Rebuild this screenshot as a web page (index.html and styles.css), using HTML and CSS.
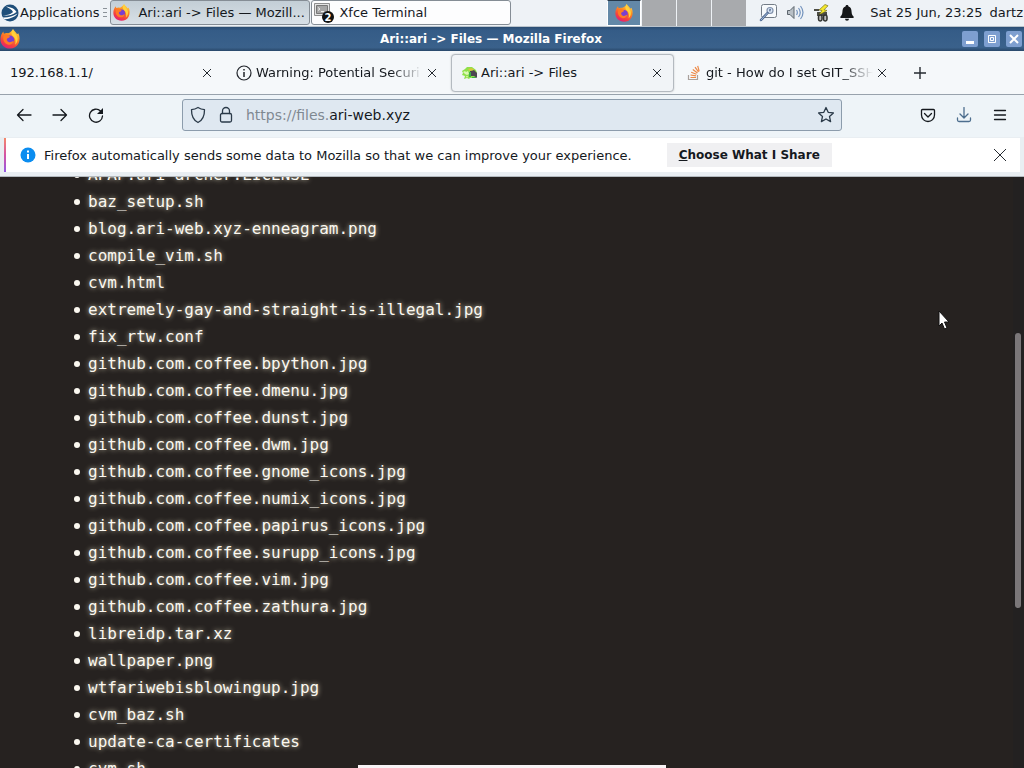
FILE: index.html
```html
<!DOCTYPE html>
<html lang="en">
<head>
    <meta charset="UTF-8">
    <meta name="viewport" content="width=device-width, initial-scale=1.0">
    <title>Ari::ari -&gt; Files</title>
    <link rel="stylesheet" href="styles.css">
</head>
<body>

<!-- Shared firefox logo -->
<svg class="sprite" aria-hidden="true">
    <defs>
        <linearGradient id="flame" x1="0.8" y1="0" x2="0.3" y2="1">
            <stop offset="0" stop-color="#ffe14d"/>
            <stop offset="0.4" stop-color="#ff8a1e"/>
            <stop offset="0.75" stop-color="#f5403f"/>
            <stop offset="1" stop-color="#e01f79"/>
        </linearGradient>
        <symbol id="firefox" viewBox="0 0 20 20">
            <path fill="url(#flame)" d="M13 0c1 2 3 3 4 5 .6-.1 1-.4 1.300-.8C20 7 20 12 18.500 14.600 16.800 18 13.600 19.600 10 19.600 4.500 19.600.4 15.500.4 10.200.4 7 1.700 4.300 3.400 2.500c0 1 .2 1.600.6 2.200C5.200 4 6.800 3.900 8 4.300c1.800-.6 3.900-2 5-4.300z"/>
            <circle fill="#7a3fd0" cx="10" cy="10.800" r="4.200"/>
            <path fill="#ff7a24" d="M3.600 7c2-1.600 4.600-1.400 6.400.6-.5 1.300-1.700 1.400-2.700 1.900-1 .7-.4 2.800 1.300 3.500 1.800.7 3.400-.5 5.100-1-.6 3.200-3.500 4.200-5.900 3.500C4 14.500 2.600 10.600 3.600 7z"/>
            <path fill="#ffd23c" d="M13 .4c.5 3 4.400 5 4.700 9.200.1 2.600-1 4.700-2.600 6.200 1-3.200.5-6.600-2-8.500-1.700-1.500-2.400-4-.1-6.900z"/>
        </symbol>
    </defs>
</svg>

<header class="panel">
    <button class="app-menu">
        <svg width="18" height="18" viewBox="0 0 18 18"><circle cx="9" cy="9" r="8.500" fill="#1f4f7a"/><path fill="#fff" d="M5 2.500c5 .5 9 2.500 10.500 5.500C12 11 7 12 1.500 11.800 7 11 11 9.500 12 8 11 5.500 8 4 5 2.500z"/><path fill="#fff" d="M1.800 13.600c5 .2 10-.8 14.700-4-1 2.300-7 6-13.500 5.500z"/></svg>
        <span>Applications</span>
    </button>
    <span class="handle"></span>
    <button class="task task-active">
        <svg width="17" height="17"><use href="#firefox"/></svg>
        <span>Ari::ari -&gt; Files — Mozill...</span>
    </button>
    <button class="task">
        <svg width="20" height="20" viewBox="0 0 20 20"><path fill="#e4e4e4" stroke="#8e8e8e" d="M.5.500h15v12H.5z"/><path fill="#a5a5a5" stroke="#777" d="M2.500 2.500h11v8h-11z"/><path stroke="#eee" fill="none" d="M4 4.500l2 1.500-2 1.500M7 8.500h3"/><circle cx="14" cy="14" r="6" fill="#111"/><text class="badge" x="14" y="18">2</text></svg>
        <span>Xfce Terminal</span>
    </button>
    <nav class="pager" aria-label="Workspaces">
        <button class="desk desk-active" aria-label="Workspace 1"><svg width="18" height="18"><use href="#firefox"/></svg></button>
        <button class="desk" aria-label="Workspace 2"></button>
        <button class="desk" aria-label="Workspace 3"></button>
        <button class="desk" aria-label="Workspace 4"></button>
    </nav>
    <div class="tray">
        <svg width="18" height="18" viewBox="0 0 18 18"><rect x="2.500" y=".5" width="15" height="13" rx="2" fill="#f7fafc" stroke="#737c86"/><circle cx="11" cy="6.500" r="3" fill="#d7e4f3" stroke="#8292ac" stroke-width="1.200"/><path d="M11 4.500l1 1-1 2.500-1-2z" fill="#55688c"/><path d="M8.500 9L2 16" stroke="#4a648c" stroke-width="2.500" stroke-linecap="round"/><path d="M8.500 9L2 16" stroke="#a5bddd" stroke-linecap="round"/></svg>
        <svg width="18" height="18" viewBox="0 0 18 18"><path fill="#b9c0c6" stroke="#5d666e" d="M1.500 6.500h2.500l4-4v12l-4-4H1.500z"/><path fill="none" stroke="#7393bd" stroke-width="1.200" d="M10.500 6q1.700 2.500 0 5M12.500 4q3.500 4.500 0 9M14.500 2q5 6.500 0 13"/></svg>
        <svg width="18" height="18" viewBox="0 0 18 18"><path fill="#4c4c45" d="M1 5h5v2H1zM4 8h10v4H4z"/><path fill="#f6e92c" stroke="#77741b" stroke-width=".7" d="M12 .500L6 6l3 .5L6 11l8-4.500-3-.7 4-4z"/><g fill="#bbb" stroke="#30322f" stroke-width="1.500"><rect x="5.500" y="11" width="3.500" height="6" rx="1.700"/><rect x="10.500" y="11" width="3.500" height="6" rx="1.700"/></g></svg>
        <svg width="14" height="16" viewBox="0 0 14 16"><path fill="#151719" d="M7 0c1 0 1.500.7 1.500 1.500C11 2.300 11.500 4.500 11.600 7c.1 2.500.9 3.500 2 4.500V13H.4v-1.500c1.100-1 1.900-2 2-4.500.1-2.500.6-4.700 3.100-5.500C5.500.7 6 0 7 0zM5 13.700h4a2 2 0 0 1-4 0z"/></svg>
    </div>
    <time class="clock">Sat 25 Jun, 23:25</time>
    <span class="user">dartz</span>
</header>

<div class="titlebar">
    <svg width="20" height="20"><use href="#firefox"/></svg>
    <h1>Ari::ari -&gt; Files — Mozilla Firefox</h1>
    <div class="win-buttons">
        <button aria-label="Minimize"><svg width="16" height="16" viewBox="0 0 16 16"><path fill="#fff" d="M4 10h8v3H4z"/></svg></button>
        <button aria-label="Maximize"><svg width="16" height="16" viewBox="0 0 16 16"><path fill="none" stroke="#fff" d="M4.500 4.500h7v7h-7z"/><path fill="none" stroke="#fff" d="M6.500 6.500h3v3h-3z"/></svg></button>
        <button aria-label="Close"><svg width="16" height="16" viewBox="0 0 16 16"><path stroke="#fff" stroke-width="2" d="M4 4l8 8M12 4l-8 8"/></svg></button>
    </div>
</div>

<div class="tabs">
    <div class="tab">
        <a href="#" class="tab-title">192.168.1.1/</a>
        <button class="tab-close" aria-label="Close tab"><svg width="10" height="10" viewBox="0 0 10 10"><path d="M1 1l8 8M9 1l-8 8"/></svg></button>
    </div>
    <div class="tab">
        <svg width="16" height="16" viewBox="0 0 16 16"><circle cx="8" cy="8" r="7" fill="none" stroke="#20242a" stroke-width="1.200"/><path stroke="#20242a" stroke-width="1.500" d="M8 7v5M8 4v1.500"/></svg>
        <a href="#" class="tab-title tab-fade">Warning: Potential Securi</a>
        <button class="tab-close" aria-label="Close tab"><svg width="10" height="10" viewBox="0 0 10 10"><path d="M1 1l8 8M9 1l-8 8"/></svg></button>
    </div>
    <div class="tab tab-active">
        <svg width="16" height="16" viewBox="0 0 16 16"><path fill="#8fe04a" d="M1 6l3-2 2-2 5 0 4 3 1 3-1 5H9l-1 1-2-1-3 1 1-3-3-1 1-2z"/><path fill="#dcf8b4" d="M2 7l2-1 1 1 2-1 1 3-2 1-2-1zM5 11l2 0-1 2z"/><path fill="#4b4551" d="M9 6l4-1 3 3v5l-3-2-4 0z"/><path fill="#d9c63a" d="M7 4l4-1 2 2-4 1z"/><path fill="#3fae46" d="M8 7l2 0v5H8zM11 12h4v1h-4z"/></svg>
        <a href="#" class="tab-title">Ari::ari -&gt; Files</a>
        <button class="tab-close" aria-label="Close tab"><svg width="10" height="10" viewBox="0 0 10 10"><path d="M1 1l8 8M9 1l-8 8"/></svg></button>
    </div>
    <div class="tab">
        <svg width="16" height="16" viewBox="0 0 16 16"><path fill="none" stroke="#a9a19c" stroke-width="1.200" d="M2.500 10v4.500h9V10"/><path stroke="#ed8a48" stroke-width="1.200" d="M4.500 12.500h5.500M4.500 10l5.500.9M5.200 7.300l5.300 2M6.800 4.500l4.700 3.500M9 2.200l3.500 4.600M11.700.8l1.500 5.500"/></svg>
        <a href="#" class="tab-title tab-fade">git - How do I set GIT_SSH</a>
        <button class="tab-close" aria-label="Close tab"><svg width="10" height="10" viewBox="0 0 10 10"><path d="M1 1l8 8M9 1l-8 8"/></svg></button>
    </div>
    <button class="new-tab" aria-label="New tab"><svg width="14" height="14" viewBox="0 0 14 14"><path d="M7 1v12M1 7h12"/></svg></button>
</div>

<div class="toolbar">
    <div class="tools">
        <button aria-label="Back"><svg width="16" height="16" viewBox="0 0 16 16"><path d="M15 8H1.500M7 2.500L1.500 8 7 13.500"/></svg></button>
        <button aria-label="Forward"><svg width="16" height="16" viewBox="0 0 16 16"><path d="M1 8h13.500M9 2.500L14.500 8 9 13.500"/></svg></button>
        <button aria-label="Reload"><svg width="16" height="16" viewBox="0 0 16 16"><path d="M12.500 4A6.500 6.500 0 1 0 14.500 9"/><path fill="#15191e" stroke="none" d="M15 1v6H9z"/></svg></button>
    </div>
    <div class="urlbar">
        <svg width="16" height="18" viewBox="0 0 16 18"><path d="M8 1.500c2 1.300 4 2 6.500 2.200C14.600 10 13 14 8 16.500 3 14 1.400 10 1.500 3.700 4 3.500 6 2.800 8 1.500z"/></svg>
        <svg width="16" height="18" viewBox="0 0 16 18"><rect x="2.500" y="7.500" width="11" height="8.500" rx="1.500"/><path d="M4.500 7.500V5a3.500 3.500 0 0 1 7 0v2.500"/></svg>
        <a href="#" class="url"><span>https://files.</span>ari-web.xyz</a>
        <button aria-label="Bookmark this page"><svg width="18" height="18" viewBox="0 0 18 18"><path d="M9 1.500l2.200 4.800 5.200.6-3.900 3.500 1.100 5.200L9 13l-4.600 2.600 1.100-5.200L1.600 6.900l5.200-.6z"/></svg></button>
    </div>
    <div class="tools tools-right">
        <button aria-label="Save to Pocket"><svg width="16" height="16" viewBox="0 0 16 16"><path d="M2.500 2.500h11a1 1 0 0 1 1 1V8a6.500 6.500 0 0 1-13 0V3.500a1 1 0 0 1 1-1zM4.500 6.500L8 10l3.500-3.500"/></svg></button>
        <button class="download" aria-label="Downloads"><svg width="16" height="16" viewBox="0 0 16 16"><path d="M8 .5v10M4 7l4 4 4-4M1.500 11v2a1.500 1.500 0 0 0 1.500 1.500h10a1.500 1.500 0 0 0 1.500-1.500v-2"/></svg></button>
        <button aria-label="Open menu"><svg width="16" height="16" viewBox="0 0 16 16"><path d="M2.500 3.500h11M2.500 8h11M2.500 12.500h11"/></svg></button>
    </div>
</div>

<div class="notice-wrap">
    <div class="notice">
        <svg width="16" height="16" viewBox="0 0 16 16"><circle cx="8" cy="8" r="7.500" fill="#0b8df0"/><path stroke="#fff" stroke-width="2" d="M8 7v5M8 3.500v2"/></svg>
        <p>Firefox automatically sends some data to Mozilla so that we can improve your experience.</p>
        <button class="share"><u>C</u>hoose What I Share</button>
        <button class="notice-close" aria-label="Dismiss"><svg width="14" height="14" viewBox="0 0 14 14"><path d="M1 1l12 12M13 1L1 13"/></svg></button>
    </div>
</div>

<main class="page">
    <ul class="files">
        <li><a href="#">APAP.ari-archer.LICENSE</a></li>
        <li><a href="#">baz_setup.sh</a></li>
        <li><a href="#">blog.ari-web.xyz-enneagram.png</a></li>
        <li><a href="#">compile_vim.sh</a></li>
        <li><a href="#">cvm.html</a></li>
        <li><a href="#">extremely-gay-and-straight-is-illegal.jpg</a></li>
        <li><a href="#">fix_rtw.conf</a></li>
        <li><a href="#">github.com.coffee.bpython.jpg</a></li>
        <li><a href="#">github.com.coffee.dmenu.jpg</a></li>
        <li><a href="#">github.com.coffee.dunst.jpg</a></li>
        <li><a href="#">github.com.coffee.dwm.jpg</a></li>
        <li><a href="#">github.com.coffee.gnome_icons.jpg</a></li>
        <li><a href="#">github.com.coffee.numix_icons.jpg</a></li>
        <li><a href="#">github.com.coffee.papirus_icons.jpg</a></li>
        <li><a href="#">github.com.coffee.surupp_icons.jpg</a></li>
        <li><a href="#">github.com.coffee.vim.jpg</a></li>
        <li><a href="#">github.com.coffee.zathura.jpg</a></li>
        <li><a href="#">libreidp.tar.xz</a></li>
        <li><a href="#">wallpaper.png</a></li>
        <li><a href="#">wtfariwebisblowingup.jpg</a></li>
        <li><a href="#">cvm_baz.sh</a></li>
        <li><a href="#">update-ca-certificates</a></li>
        <li><a href="#">cvm.sh</a></li>
    </ul>
    <div class="scrollbar"><div class="thumb"></div></div>
</main>

<!-- Hidden dock edge and mouse pointer -->
<div class="dock"></div>
<svg class="pointer" width="12" height="20" viewBox="0 0 12 20"><path fill="#fff" stroke="#111" d="M1 1v15l3-3 2.500 6 2.500-1-2.500-6H11z"/></svg>

</body>
</html>
```
FILE: styles.css
```css
* {
    box-sizing: border-box;
}
body {
    margin: 0;
    height: 100vh;
    display: flex;
    flex-direction: column;
    overflow: hidden;
    position: relative;
    font-family: "DejaVu Sans", sans-serif;
    font-size: 13px;
    color: #15191e;
    background-color: #262220;
}
button {
    font: inherit;
    color: inherit;
    border: none;
    background: none;
    padding: 0;
    display: flex;
    align-items: center;
    justify-content: center;
}
a {
    color: inherit;
    text-decoration: none;
}
svg {
    flex: none;
    display: block;
}
.sprite {
    position: absolute;
    width: 0;
    height: 0;
}

/* Desktop panel */
.panel {
    flex: none;
    height: 27px;
    display: flex;
    align-items: center;
    padding-bottom: 1px;
    background-color: #eef2f6;
    border-bottom: 1px solid #b9c3cc;
    white-space: nowrap;
}
.app-menu {
    gap: 1px;
    padding-left: 1px;
}
.handle {
    width: 4px;
    height: 10px;
    margin: 0 3px 0 4px;
    background: repeating-linear-gradient(#8b9299 0 1px, transparent 1px 4px);
}
.task {
    flex: 0 1 200px;
    min-width: 0;
    height: 25px;
    margin-right: 1px;
    justify-content: flex-start;
    gap: 5px;
    padding-left: 2px;
    overflow: hidden;
    background-color: #fdfdfe;
    border: 1px solid #858d95;
    border-radius: 3px;
}
.task-active {
    gap: 8px;
    background: linear-gradient(#c3ced6, #d8e0e6);
}
.badge {
    font-size: 10px;
    font-weight: bold;
    fill: #fff;
    text-anchor: middle;
}
.pager {
    display: flex;
    gap: 1px;
    height: 26px;
    margin-left: auto;
    background-color: #eef2f6;
}
.desk {
    width: 34px;
    background-color: #a8aaad;
}
.desk-active {
    background-color: #6388a7;
    border: 1px solid #fff;
    border-top-color: #26384a;
}
.tray {
    display: flex;
    align-items: center;
    gap: 9px;
    padding: 0 16px 0 13px;
}
.user {
    padding: 0 1px 0 7px;
}

/* Window title */
.titlebar {
    flex: none;
    height: 24px;
    display: flex;
    align-items: center;
    color: #fff;
    background: linear-gradient(#2b4d73, #355c87 15%, #3a618b 85%, #29486a);
}
.titlebar h1 {
    flex: 1;
    margin: 0;
    font-size: 12px;
    text-align: center;
}
.win-buttons {
    display: flex;
    gap: 6px;
    padding-right: 2px;
}
.win-buttons button {
    background-color: #7e9fd0;
    border-radius: 2px;
}

/* Tab strip */
.tabs {
    flex: none;
    height: 44px;
    display: flex;
    align-items: center;
    padding-left: 1px;
    background-color: #f5f8fa;
    border-bottom: 1px solid #98a2ac;
}
.tab {
    flex: 0 1 223px;
    min-width: 0;
    height: 38px;
    margin-right: 2px;
    display: flex;
    align-items: center;
    gap: 4px;
    padding: 0 11px 0 9px;
    border: 1px solid transparent;
    border-radius: 4px;
}
.tab:first-child {
    padding-left: 8px;
}
.tab-active {
    background-color: #f1f4f7;
    border-color: #b4bac0;
    box-shadow: 0 0 2px rgba(0, 0, 0, 0.2);
}
.tab-title {
    flex: 1;
    min-width: 0;
    overflow: hidden;
    white-space: nowrap;
}
.tab-fade {
    mask-image: linear-gradient(to left, transparent, #000 32px);
}
.tab-close path,
.new-tab path,
.notice-close path {
    fill: none;
    stroke: #252a30;
    stroke-width: 1;
}
.new-tab {
    margin-left: 12px;
}
.new-tab path {
    stroke-width: 1.4;
}

/* Navigation */
.toolbar {
    flex: none;
    height: 42px;
    display: flex;
    align-items: center;
    padding-bottom: 2px;
    background-color: #eef4f8;
}
.toolbar svg {
    fill: none;
    stroke: #15191e;
    stroke-width: 1.3;
    stroke-linecap: round;
    stroke-linejoin: round;
}
.tools {
    flex: 0 0 182px;
    display: flex;
    gap: 20px;
    padding: 0 16px;
}
.tools-right {
    justify-content: flex-end;
}
.toolbar .download svg {
    stroke: #4d6e8e;
}
.urlbar {
    flex: 1;
    min-width: 0;
    height: 32px;
    display: flex;
    align-items: center;
    gap: 12px;
    padding: 0 6px 0 7px;
    font-size: 14px;
    background-color: #dfe8f1;
    border: 1px solid #8c9cac;
    border-radius: 3px;
}
.urlbar svg {
    stroke: #2b3a49;
}
.url {
    flex: 1;
}
.url span {
    color: #7f8891;
}

/* Data sharing notice */
.notice-wrap {
    flex: none;
    padding: 1px 4px 4px;
    background-color: #e9eef2;
    border-bottom: 1px solid #b3b9be;
}
.notice {
    height: 34px;
    display: flex;
    align-items: center;
    padding: 0 13px 0 14px;
    background-color: #fff;
    border-left: 2px solid;
    border-image: linear-gradient(#f68c66, #d453a4, #9059e6) 1;
}
.notice p {
    margin: 0 35px 0 8px;
    white-space: nowrap;
}
.share {
    height: 24px;
    padding: 0 12px;
    font-size: 12px;
    font-weight: bold;
    background-color: #f0f0f2;
    white-space: nowrap;
}
.notice-close {
    margin-left: auto;
}

/* File listing */
.page {
    flex: 1;
    min-height: 0;
    display: flex;
    overflow: hidden;
    color: #fbf8f0;
    background-color: #262220;
}
.files {
    flex: 1;
    margin: -16px 0 0;
    padding-left: 74px;
    list-style: none;
    font-family: "DejaVu Sans Mono", monospace;
    font-size: 16px;
    line-height: 27px;
}
.files li {
    display: flex;
    align-items: center;
    gap: 8px;
}
.files li::before {
    content: "";
    width: 6px;
    height: 6px;
    border-radius: 50%;
    background-color: #fbf8f0;
}
.files a {
    text-shadow: 0 0 5px #d9d2b8;
}
.scrollbar {
    width: 11px;
    padding: 156px 3px 0 2px;
    background-color: #232121;
}
.thumb {
    height: 275px;
    border-radius: 3px;
    background-color: #7b7779;
}
.dock {
    position: absolute;
    bottom: 0;
    left: 35%;
    width: 30%;
    height: 3px;
    background-color: #f8f3f5;
}
.pointer {
    position: absolute;
    left: 938px;
    top: 310px;
}
```
